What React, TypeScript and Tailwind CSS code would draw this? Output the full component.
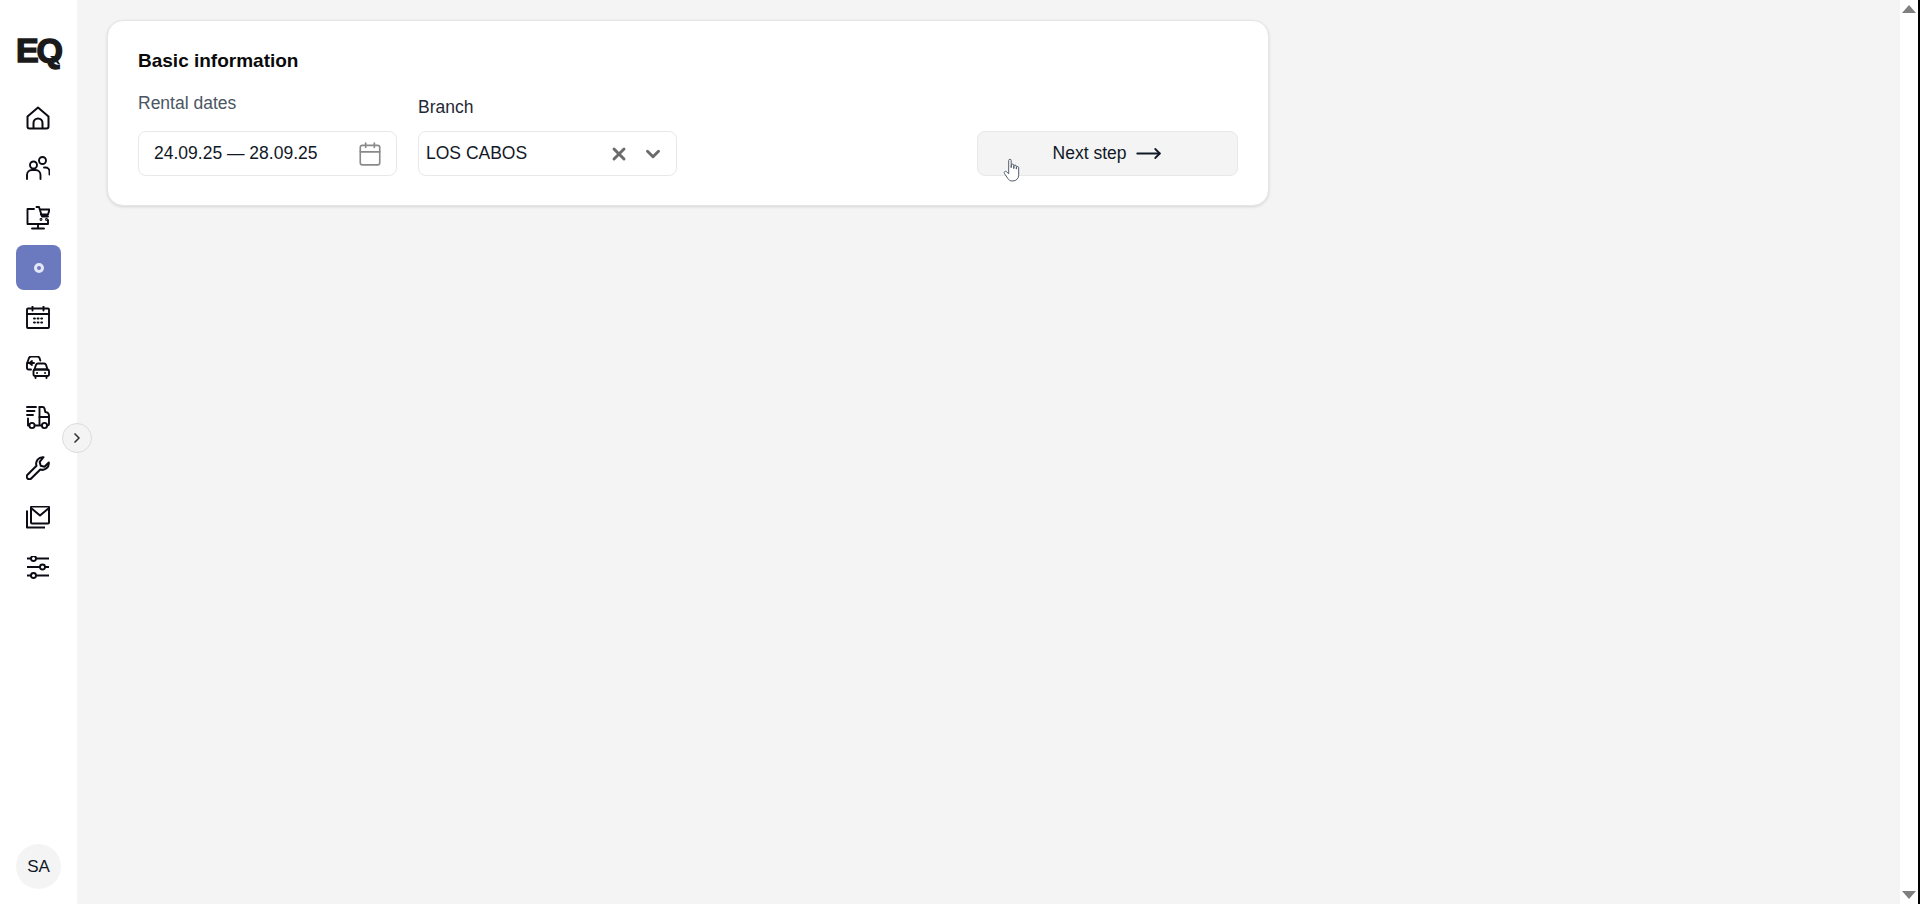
import React from "react";
import { Calendar, ChevronDown, ChevronRight, MoveRight, X } from "lucide-react";

const iconClass = "-ml-px h-6 w-6";

const HomeIcon = () => (
    <svg viewBox="0 0 24 24" fill="none" stroke="#0b0b14" strokeWidth="2" strokeLinejoin="round" className={iconClass}>
        <path d="M1.500 10.500 12 1.500l10.500 9v10a2 2 0 0 1-2 2h-17a2 2 0 0 1-2-2z" />
        <path d="M7.500 22.500V17a4.500 4.500 0 0 1 9 0v5.500" />
    </svg>
);

const UsersIcon = () => (
    <svg viewBox="0 0 24 24" fill="none" stroke="#0b0b14" strokeWidth="1.9" strokeLinecap="round" className={iconClass}>
        <circle cx="7.500" cy="9" r="3.500" />
        <circle cx="16.500" cy="4.500" r="3.500" />
        <path d="M1 23v-4a5 5 0 0 1 5-5h3.500a5 5 0 0 1 5 5v4" />
        <path d="M18 11.500h1.500A4 4 0 0 1 23.500 15.500v3" />
    </svg>
);

const MonitorCartIcon = () => (
    <svg viewBox="0 0 24 24" fill="none" stroke="#0b0b14" strokeWidth="1.9" strokeLinecap="round" strokeLinejoin="round" className={iconClass}>
        <path d="M8 3H1.500v15H22v-4" />
        <path d="M12 18v4.500M6 22.500h12" />
        <path d="M10.500 1h2.500l3 9.500h6M14 3.500h9.500L22 8.500h-7.200" />
        <circle cx="15" cy="13.500" r=".5" />
        <circle cx="20.500" cy="13.500" r=".5" />
    </svg>
);

const CalendarGridIcon = () => (
    <svg viewBox="0 0 24 24" fill="none" stroke="#0b0b14" strokeWidth="1.9" strokeLinecap="round" className={iconClass}>
        <rect x="1" y="2.500" width="22" height="19.500" rx="1" />
        <path d="M1 8h22M6.500 0.500v4M17.500 0.500v4" />
        <path d="M8 12.500h.9M11.600 12.500h.9M15.200 12.500h.9M8 16.500h.9M11.600 16.500h.9M15.200 16.500h.9" strokeWidth="2" />
    </svg>
);

const CarsIcon = () => (
    <svg viewBox="0 0 24 24" fill="none" stroke="#0b0b14" strokeWidth="1.9" strokeLinecap="round" strokeLinejoin="round" className={iconClass}>
        <path d="M5 13.500H2.500A1.500 1.500 0 0 1 1 12V7.500L3 2a2.500 2.500 0 0 1 2.300-1.500h6A2.500 2.500 0 0 1 13.500 2l.8 2.500" />
        <path d="M1.500 7H8M3.500 7 6 5M3.500 7 6 9" />
        <path d="M8.500 13.500 10 8.800a2 2 0 0 1 1.900-1.300h6.200A2 2 0 0 1 20 8.800l1.500 4.700" />
        <rect x="7.500" y="13.500" width="15.500" height="6.500" rx="1.800" />
        <path d="M9.500 20v2M20.500 20v2M11 17h.1M19 17h.1M8.500 13.500h13" />
    </svg>
);

const TruckIcon = () => (
    <svg viewBox="0 0 24 24" fill="none" stroke="#0b0b14" strokeWidth="1.9" strokeLinecap="round" strokeLinejoin="round" className={iconClass}>
        <path d="M1 1h9M1 5h7.500M1 9h6M2 12.500v7h1" />
        <path d="M13.500 1v18.500M9 19.500h6.500" />
        <path d="M13.500 1h3a2 2 0 0 1 2 1.500l.8 3.500A4 4 0 0 1 23 10v8a1.500 1.500 0 0 1-1.500 1.500M13.500 11H23" />
        <circle cx="6" cy="19.500" r="2.600" />
        <circle cx="18.500" cy="19.500" r="2.600" />
    </svg>
);

const WrenchIcon = () => (
    <svg viewBox="0 0 24 24" fill="none" stroke="#0b0b14" strokeWidth="2" strokeLinejoin="round" className={iconClass}>
        <path d="M17.500 1.200a6.500 6.500 0 0 0-7 8.500L1.500 18.800a2.600 2.600 0 0 0 3.700 3.700l9.100-9a6.500 6.500 0 0 0 8.500-7l-4.300 4.200-3.800-1-1-3.800z" />
    </svg>
);

const MailStackIcon = () => (
    <svg viewBox="0 0 24 24" fill="none" stroke="#0b0b14" strokeWidth="2" strokeLinejoin="round" className={iconClass}>
        <rect x="5" y="0.500" width="18" height="17" rx="1" />
        <path d="m5 2 9 7.500L23 2" />
        <path d="M1 4.500V21.500h18" />
    </svg>
);

const SlidersIcon = () => (
    <svg viewBox="0 0 24 24" fill="none" stroke="#0b0b14" strokeWidth="1.9" className={iconClass}>
        <path d="M1 2.500h4M10 2.500h13M1 11h13M19 11h4M1 19.500h4M10 19.500h13" />
        <circle cx="7.500" cy="2.500" r="2.500" />
        <circle cx="16.500" cy="11" r="2.500" />
        <circle cx="7.500" cy="19.500" r="2.500" />
    </svg>
);

const CursorIcon = () => (
    <svg viewBox="0 0 20 26" className="h-[25px] w-[19px]" fill="#ffffff" stroke="#4b5563" strokeWidth="1" strokeLinejoin="round">
        <path d="M6 2.500a1.300 1.300 0 0 1 2.600 0V10l.3-2.500a1.200 1.200 0 0 1 2.400 0V11l.3-2.500a1.200 1.200 0 0 1 2.400 0V11.500l.3-1.600a1.100 1.100 0 0 1 2.200 0V18a6 6 0 0 1-6 6h-1c-2 0-3.200-.8-4.300-2.300L1.500 16a1.400 1.400 0 0 1 2.100-1.800L6 16.500z" />
    </svg>
);

const NavItem: React.FC<{ children: React.ReactNode; active?: boolean }> = ({ children, active }) => (
    <div
        className={
            active
                ? "flex h-[45px] w-[45px] items-center justify-center rounded-lg bg-[#6b7abf]"
                : "flex h-[45px] w-[45px] items-center justify-center"
        }
    >
        {children}
    </div>
);

const Logo = () => (
    <div className="relative -mt-px mb-px flex h-[40px] items-center text-[34px] font-bold leading-none tracking-[-2px] text-[#1a1a1a] [-webkit-text-stroke:1.5px_#1a1a1a]">
        EQ
        <svg viewBox="0 0 10 8" className="absolute left-[34px] top-[26px] h-[8px] w-[10px]" fill="#1a1a1a">
            <path d="M0 0h5l5 8H8z" />
        </svg>
    </div>
);

const Sidebar = () => (
    <aside className="relative flex h-full w-[77px] shrink-0 flex-col items-center bg-white pb-[15px] pt-[31px]">
        <Logo />
        <nav className="mt-[24px] flex flex-col gap-[5px]">
            <NavItem><HomeIcon /></NavItem>
            <NavItem><UsersIcon /></NavItem>
            <NavItem><MonitorCartIcon /></NavItem>
            <NavItem active>
                <div className="h-[10px] w-[10px] rounded-full border-[3px] border-[#e4e7f5]" />
            </NavItem>
            <NavItem><CalendarGridIcon /></NavItem>
            <NavItem><CarsIcon /></NavItem>
            <NavItem><TruckIcon /></NavItem>
            <NavItem><WrenchIcon /></NavItem>
            <NavItem><MailStackIcon /></NavItem>
            <NavItem><SlidersIcon /></NavItem>
        </nav>
        <div className="mt-auto flex h-[45px] w-[45px] items-center justify-center rounded-full bg-[#f4f4f4] text-[17px] text-[#111827]">
            SA
        </div>
        <button className="absolute left-[62px] top-[423px] flex h-[30px] w-[30px] items-center justify-center rounded-full border border-[#dcdcdc] bg-[#f4f4f4]">
            <ChevronRight size={16} strokeWidth={2.5} className="text-[#333333]" />
        </button>
    </aside>
);

const BasicInformation = () => (
    <section className="w-[1162px] rounded-[16px] border border-[#e5e5e5] bg-white px-[30px] pb-[29px] pt-[28px] shadow-[0_1px_3px_rgba(0,0,0,0.12)]">
        <h2 className="text-[19px] font-bold leading-[24px] text-[#0a0a0a]">Basic information</h2>
        <div className="mt-[20px] flex items-end">
            <div className="w-[259px]">
                <div className="text-[17.5px] leading-[20px] text-[#4b5563]">Rental dates</div>
                <div className="mt-[18px] flex h-[45px] items-center justify-between rounded-lg border border-[#e8e8e8] bg-white pl-[15px] pr-[13px] text-[17.5px] text-[#111827]">
                    <span>24.09.25 — 28.09.25</span>
                    <Calendar size={26} strokeWidth={1.5} className="text-[#8a8a8a]" />
                </div>
            </div>
            <div className="ml-[21px] w-[259px]">
                <div className="text-[17.5px] leading-[20px] text-[#1f2937]">Branch</div>
                <div className="mt-[14px] flex h-[45px] items-center rounded-lg border border-[#e8e8e8] bg-white pl-[7px] pr-[12px] text-[17.5px] text-[#111827]">
                    <span className="flex-1">LOS CABOS</span>
                    <X size={20} strokeWidth={3.5} className="text-[#6b6b6b]" />
                    <ChevronDown size={22} strokeWidth={3.2} className="ml-[13px] text-[#6b6b6b]" />
                </div>
            </div>
            <button className="relative ml-auto flex h-[45px] w-[261px] items-center justify-center gap-[9px] rounded-lg border border-[#e8e8e8] bg-[#f4f4f4] text-[17.5px] text-[#111827]">
                Next step
                <MoveRight size={27} strokeWidth={1.6} />
                <span className="absolute left-[25px] top-[26px]">
                    <CursorIcon />
                </span>
            </button>
        </div>
    </section>
);

const Scrollbar = () => (
    <div className="flex h-full w-[20px] shrink-0 bg-white">
        <div className="flex w-[18px] flex-col items-center justify-between py-[5px]">
            <div className="h-0 w-0 border-x-[7px] border-b-[8px] border-x-transparent border-b-[#7f7f7f]" />
            <div className="h-0 w-0 border-x-[7px] border-t-[8px] border-x-transparent border-t-[#7f7f7f]" />
        </div>
        <div className="w-[2px] bg-black" />
    </div>
);

export default function App() {
    return (
        <div className="flex h-[904px] w-full overflow-hidden bg-[#f4f4f4] font-['Liberation_Sans',Arial,sans-serif]">
            <Sidebar />
            <main className="flex-1 pl-[30px] pt-[20px]">
                <BasicInformation />
            </main>
            <Scrollbar />
        </div>
    );
}
